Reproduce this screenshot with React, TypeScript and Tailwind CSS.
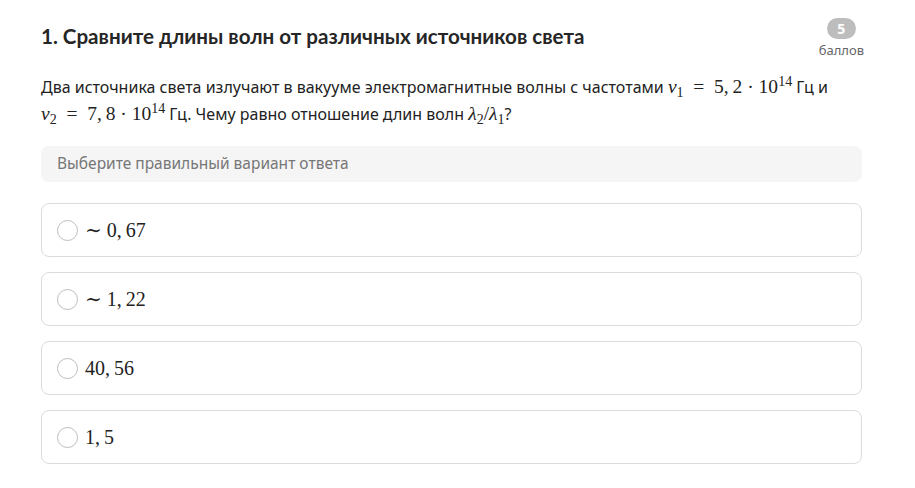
import React from "react";

const serif = '"Liberation Serif", "DejaVu Serif", serif';

const M = ({ children }: { children: React.ReactNode }) => (
  <span className="text-[19.5px] leading-none" style={{ fontFamily: serif }}>
    {children}
  </span>
);

const Sub = ({ children }: { children: React.ReactNode }) => (
  <sub className="text-[14px]">{children}</sub>
);
const Sup = ({ children }: { children: React.ReactNode }) => (
  <sup className="text-[14px]">{children}</sup>
);

const Opt = ({ children }: { children: React.ReactNode }) => (
  <div className="flex h-[54px] items-center rounded-lg border border-[#dcdcdc] bg-white pl-[15px]">
    <div className="h-[21px] w-[21px] rounded-full border border-[#bdbdbd] bg-white" />
    <div className="ml-[7px] whitespace-pre text-[20px] text-[#222]" style={{ fontFamily: serif }}>
      {children}
    </div>
  </div>
);

export default function App() {
  return (
    <div className="min-h-[488px] w-[915px] bg-white text-[#222]" style={{ fontFamily: '"Noto Sans", "Open Sans", sans-serif' }}>
      <div className="ml-[41px] w-[821px] pt-[18px]">
        <div className="flex items-start justify-between">
          <h1 className="mt-[3px] text-[20.6px] font-bold text-[#262626]" style={{ fontFamily: 'Lato, "Noto Sans", sans-serif' }}>
            1. Сравните длины волн от различных источников света
          </h1>
          <div className="-mr-[2px] flex flex-col items-center">
            <div className="flex h-[21px] w-[29px] items-center justify-center rounded-full bg-[#bdbdbd] text-[14px] font-bold leading-none text-white">
              5
            </div>
            <div className="mt-[3px] text-[13px] leading-[16px] text-[#666]">баллов</div>
          </div>
        </div>
        <p className="mt-[16px] text-[16px] leading-[27px] text-[#222]">
          Два источника света излучают в вакууме электромагнитные волны с частотами{" "}
          <M>
            <i>ν</i>
            <Sub>1</Sub>
            {"\u2002=\u20025,\u20092\u2005·\u200510"}
            <Sup>14</Sup>
          </M>{" "}
          Гц и
          <br />
          <M>
            <i>ν</i>
            <Sub>2</Sub>
            {"\u2002=\u20027,\u20098\u2005·\u200510"}
            <Sup>14</Sup>
          </M>{" "}
          Гц. Чему равно отношение длин волн{" "}
          <M>
            <i>λ</i>
            <Sub>2</Sub>/<i>λ</i>
            <Sub>1</Sub>
          </M>
          ?
        </p>
        <div className="mt-[18px] flex h-[36px] items-center rounded-lg bg-[#f5f5f5] pl-[16px] text-[15.5px] text-[#777]">
          Выберите правильный вариант ответа
        </div>
        <div className="mt-[21px] flex flex-col gap-[15px]">
          <Opt>{"∼ 0,\u200967"}</Opt>
          <Opt>{"∼ 1,\u200922"}</Opt>
          <Opt>{"40,\u200956"}</Opt>
          <Opt>{"1,\u20095"}</Opt>
        </div>
      </div>
    </div>
  );
}
